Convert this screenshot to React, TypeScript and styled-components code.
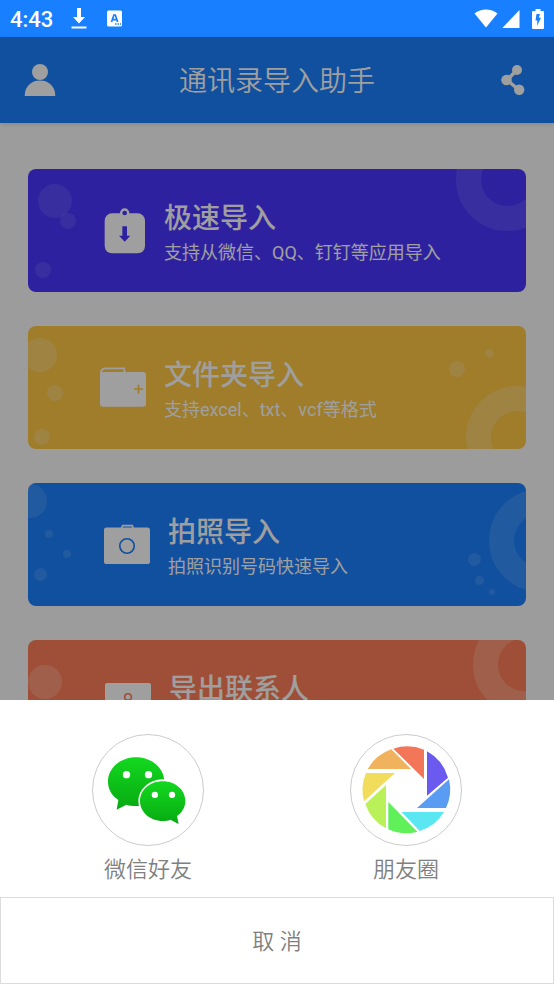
import React from "react";
import styled, { createGlobalStyle } from "styled-components";

const GlobalStyle = createGlobalStyle`
  *, *::before, *::after { box-sizing: border-box; }
  body {
    margin: 0;
    background: #fafafa;
    font-family: Roboto, "Noto Sans CJK SC", sans-serif;
  }
  button {
    margin: 0;
    padding: 0;
    border: 0;
    background: none;
    color: inherit;
    font: inherit;
    cursor: pointer;
  }
  svg { display: block; }
`;

const Screen = styled.div`
  min-height: 100vh;
  display: flex;
  flex-direction: column;
`;

const StatusBar = styled.div`
  height: 37px;
  padding: 0 10px;
  display: flex;
  align-items: center;
  justify-content: space-between;
  background: #1880ff;
  color: #fff;
`;

const StatusGroup = styled.div<{ $gap: number }>`
  display: flex;
  align-items: center;
  gap: ${(p) => p.$gap}px;
`;

const Clock = styled.time`
  padding-top: 2px;
  font-size: 22px;
  line-height: 26px;
  font-weight: 500;
`;

const Stage = styled.div`
  position: relative;
  flex: 1;
  display: flex;
  flex-direction: column;
`;

const Header = styled.header`
  height: 86px;
  padding: 0 22px;
  display: grid;
  grid-template-columns: 36px 1fr 36px;
  align-items: center;
  background: #1a80ff;
  color: #fff;
  box-shadow: 0 1px 4px rgba(0, 0, 0, 0.15);
`;

const HeaderButton = styled.button`
  height: 36px;
  display: grid;
  place-items: center;
`;

const Title = styled.h1`
  margin: 0;
  padding-top: 4px;
  text-align: center;
  font-size: 28px;
  line-height: 40px;
  font-weight: 350;
`;

const CardList = styled.main`
  padding: 46px 28px;
  display: flex;
  flex-direction: column;
  gap: 34px;
`;

const Card = styled.button<{ $color: string; $inset: number }>`
  position: relative;
  overflow: hidden;
  min-height: 123px;
  padding: 0 24px 0 ${(p) => p.$inset}px;
  display: flex;
  align-items: center;
  gap: 18px;
  border-radius: 8px;
  background: ${(p) => p.$color};
  color: #fff;
  text-align: left;
`;

const CardCopy = styled.span`
  min-height: 74px;
  padding-top: 6px;
  display: flex;
  flex-direction: column;
`;

const CardTitle = styled.span`
  font-size: 28px;
  line-height: 38px;
  font-weight: 500;
`;

const CardText = styled.span`
  font-size: 18px;
  line-height: 30px;
  font-weight: 400;
`;

type Spot = { side: "left" | "right"; x: number; y: number; size: number };

const Bubble = styled.span<{ $spot: Spot; $alpha: number }>`
  position: absolute;
  ${(p) => p.$spot.side}: ${(p) => p.$spot.x}px;
  top: ${(p) => p.$spot.y}px;
  width: ${(p) => p.$spot.size}px;
  height: ${(p) => p.$spot.size}px;
  border-radius: 50%;
  background: rgba(255, 255, 255, ${(p) => p.$alpha});
`;

const Ring = styled.span<{ $right: number; $top: number; $alpha: number }>`
  position: absolute;
  right: ${(p) => p.$right}px;
  top: ${(p) => p.$top}px;
  width: 103px;
  height: 103px;
  border: 25px solid rgba(255, 255, 255, ${(p) => p.$alpha});
  border-radius: 50%;
`;

const Scrim = styled.div`
  position: absolute;
  inset: 0;
  background: rgba(0, 0, 0, 0.376);
`;

const Sheet = styled.section`
  position: fixed;
  left: 0;
  right: 0;
  bottom: 0;
  background: #fff;
  color: #808080;
`;

const Options = styled.div`
  padding: 34px 92px 11px;
  display: flex;
  justify-content: space-between;
`;

const Option = styled.button`
  display: flex;
  flex-direction: column;
  align-items: center;
  gap: 8px;
  font-size: 22px;
  line-height: 32px;
  font-weight: 350;
`;

const OptionIcon = styled.span`
  width: 112px;
  height: 112px;
  border: 1px solid #ccc;
  border-radius: 50%;
`;

const Cancel = styled.button`
  width: 100%;
  height: 87px;
  padding-top: 2px;
  border: 1px solid #dcdcdc;
  font-size: 22px;
  line-height: 32px;
  font-weight: 350;
`;

const DownloadIcon = () => (
  <svg width="16" height="22" viewBox="0 0 16 22" fill="currentColor" aria-hidden="true">
    <path d="M6 0h4v9h4l-6 6.500L2 9h4z" />
    <path d="M0.500 18.500h15v2h-15z" />
  </svg>
);

const KeyboardIcon = () => (
  <svg width="15" height="17" viewBox="0 0 15 17" aria-hidden="true">
    <rect y="0.500" width="15" height="16" rx="1.500" fill="#fff" />
    <path d="M4.500 12l2.400-7h1.400l2.400 7M5.500 9.600h4.200" fill="none" stroke="#1880ff" strokeWidth="1.700" />
    <path d="M8 14h1.500M10.500 14H12M13 14h1" stroke="#1880ff" strokeWidth="1.300" />
  </svg>
);

const WifiIcon = () => (
  <svg width="24" height="19" viewBox="0 0 24 19" fill="currentColor" aria-hidden="true">
    <path d="M0.500 4.500C7-0.700 17-0.700 23.500 4.500L12 18.500z" />
  </svg>
);

const SignalIcon = () => (
  <svg width="18" height="18" viewBox="0 0 18 18" fill="currentColor" aria-hidden="true">
    <path d="M17.500 0v18H0.300z" />
  </svg>
);

const BatteryIcon = () => (
  <svg width="12" height="20" viewBox="0 0 12 20" aria-hidden="true">
    <path d="M3.500 0h5v2H11q1 0 1 1v16q0 1-1 1H1q-1 0-1-1V3q0-1 1-1h2.500z" fill="#fff" />
    <path d="M4.500 5H8L6.800 8.800H9L5 17l.4-5.600H3.500z" fill="#1880ff" />
  </svg>
);

const PersonIcon = () => (
  <svg width="32" height="34" viewBox="0 0 32 34" fill="currentColor" aria-hidden="true">
    <circle cx="16" cy="9" r="8" />
    <path d="M0.700 33C0.700 23.500 7 17.500 16 17.500S31.300 23.500 31.300 33z" />
  </svg>
);

const ShareIcon = () => (
  <svg width="26" height="30" viewBox="0 0 26 30" fill="currentColor" aria-hidden="true">
    <path d="M16 5L6 15l12 10" fill="none" stroke="currentColor" strokeWidth="3.500" />
    <circle cx="16" cy="5" r="5" />
    <circle cx="5.500" cy="15" r="5.300" />
    <circle cx="18.200" cy="24.800" r="5.200" />
  </svg>
);

const ClipboardIcon = ({ ink }: { ink: string }) => (
  <svg width="46" height="46" viewBox="240 142 138 138" aria-hidden="true">
    <rect x="254" y="158" width="121" height="120" rx="22" fill="#fff" />
    <circle cx="314" cy="157" r="10.500" fill={ink} stroke="#fff" strokeWidth="7" />
    <path d="M307 197h14v28h10l-17 18-17-18h10z" fill={ink} />
  </svg>
);

const FolderIcon = ({ ink }: { ink: string }) => (
  <svg width="46" height="46" viewBox="240 142 138 138" aria-hidden="true">
    <path d="M242 168q0-16 16-16h55v13" fill="none" stroke="#fff" strokeWidth="5" />
    <rect x="240" y="163" width="138" height="104" rx="9" fill="#fff" />
    <path d="M342 214h27M355.500 201v27" stroke={ink} strokeWidth="5" />
  </svg>
);

const CameraIcon = ({ ink }: { ink: string }) => (
  <svg width="46" height="46" viewBox="250 136 140 140" aria-hidden="true">
    <path d="M303 155l4-8h29l3 8" fill="none" stroke="#fff" strokeWidth="5" />
    <rect x="250" y="153" width="140" height="111" rx="8" fill="#fff" />
    <circle cx="320" cy="209" r="22" fill="none" stroke={ink} strokeWidth="5" />
  </svg>
);

const ContactIcon = ({ ink }: { ink: string }) => (
  <svg width="46" height="46" viewBox="0 0 46 46" aria-hidden="true">
    <rect y="4" width="46" height="38" rx="2" fill="#fff" />
    <circle cx="23" cy="18" r="3.300" fill="none" stroke={ink} strokeWidth="1.600" />
    <path d="M15 34q0-9 8-9t8 9" fill="none" stroke={ink} strokeWidth="1.600" />
  </svg>
);

const WeChatIcon = () => (
  <svg width="110" height="110" viewBox="39 30 330 330" aria-hidden="true">
    <defs>
      <linearGradient id="bubbleGreen" x1="0" y1="0" x2="0" y2="1">
        <stop offset="0" stopColor="#14d820" />
        <stop offset="1" stopColor="#06aa10" />
      </linearGradient>
    </defs>
    <path
      d="M168 97c47 0 85 32 85 73s-38 73-85 73c-10 0-20-1-29-4l-29 15 5-29C96 212 84 193 84 170c0-41 37-73 84-73z"
      fill="url(#bubbleGreen)"
    />
    <ellipse cx="248" cy="228" rx="73" ry="65" fill="#fff" />
    <path
      d="M248 169c38 0 68 26 68 59 0 18-9 34-25 45l5 24-25-13c-7 3-15 4-23 4-38 0-68-27-68-60s30-59 68-59z"
      fill="url(#bubbleGreen)"
    />
    <g fill="#fff">
      <circle cx="139.500" cy="149" r="11" />
      <circle cx="205.500" cy="149" r="11" />
      <circle cx="224.500" cy="209.500" r="9.500" />
      <circle cx="276" cy="209.500" r="9.500" />
    </g>
  </svg>
);

const MomentsIcon = () => (
  <svg width="110" height="110" viewBox="33 30 330 330" aria-hidden="true">
    <path d="M160 71A130 130 0 0 1 252 74V162z" fill="#f37658" />
    <path d="M261 79A130 130 0 0 1 324 158L261 212z" fill="#6b5af0" />
    <path d="M327 163A130 130 0 0 1 318 249H231z" fill="#5b9cf3" />
    <path d="M312 261A130 130 0 0 1 239 318L185 261z" fill="#5ae7f1" />
    <path d="M232 320A130 130 0 0 1 145 313V231z" fill="#60f15a" />
    <path d="M138 310A130 130 0 0 1 76 237L138 180z" fill="#bbf158" />
    <path d="M72 229A130 130 0 0 1 78 144H165z" fill="#f1dc5c" />
    <path d="M83 132A130 130 0 0 1 154 73L213 132z" fill="#f0b25c" />
  </svg>
);

type CardData = {
  title: string;
  text?: string;
  color: string;
  inset: number;
  alpha: number;
  icon: React.ComponentType<{ ink: string }>;
  ring: { right: number; top: number };
  bubbles: Spot[];
};

const cards: CardData[] = [
  {
    title: "极速导入",
    text: "支持从微信、QQ、钉钉等应用导入",
    color: "#4a36ff",
    inset: 72,
    alpha: 0.1,
    icon: ClipboardIcon,
    ring: { right: -33, top: -41 },
    bubbles: [
      { side: "left", x: 10, y: 15, size: 34 },
      { side: "left", x: 32, y: 44, size: 16 },
      { side: "left", x: 7, y: 93, size: 16 },
    ],
  },
  {
    title: "文件夹导入",
    text: "支持excel、txt、vcf等格式",
    color: "#ffc845",
    inset: 72,
    alpha: 0.2,
    icon: FolderIcon,
    ring: { right: -43, top: 60 },
    bubbles: [
      { side: "left", x: -5, y: 12, size: 34 },
      { side: "left", x: 19, y: 59, size: 16 },
      { side: "left", x: 6, y: 103, size: 16 },
      { side: "right", x: 61, y: 35, size: 16 },
      { side: "right", x: 32, y: 23, size: 9 },
    ],
  },
  {
    title: "拍照导入",
    text: "拍照识别号码快速导入",
    color: "#1a80ff",
    inset: 76,
    alpha: 0.13,
    icon: CameraIcon,
    ring: { right: -66, top: 6 },
    bubbles: [
      { side: "left", x: -15, y: 1, size: 34 },
      { side: "left", x: 17, y: 47, size: 8 },
      { side: "left", x: 35, y: 67, size: 8 },
      { side: "left", x: 6, y: 85, size: 13 },
      { side: "right", x: 45, y: 70, size: 13 },
      { side: "right", x: 42, y: 93, size: 9 },
      { side: "right", x: 31, y: 106, size: 6 },
    ],
  },
  {
    title: "导出联系人",
    color: "#ff7f58",
    inset: 77,
    alpha: 0.2,
    icon: ContactIcon,
    ring: { right: -50, top: -27 },
    bubbles: [{ side: "left", x: 0, y: 25, size: 34 }],
  },
];

export default function App() {
  return (
    <Screen>
      <GlobalStyle />
      <StatusBar>
        <StatusGroup $gap={18}>
          <Clock>4:43</Clock>
          <StatusGroup $gap={20}>
            <DownloadIcon />
            <KeyboardIcon />
          </StatusGroup>
        </StatusGroup>
        <StatusGroup $gap={4}>
          <WifiIcon />
          <StatusGroup $gap={12}>
            <SignalIcon />
            <BatteryIcon />
          </StatusGroup>
        </StatusGroup>
      </StatusBar>
      <Stage>
        <Header>
          <HeaderButton aria-label="我的">
            <PersonIcon />
          </HeaderButton>
          <Title>通讯录导入助手</Title>
          <HeaderButton aria-label="分享">
            <ShareIcon />
          </HeaderButton>
        </Header>
        <CardList>
          {cards.map(({ icon: Icon, ...card }) => (
            <Card key={card.title} $color={card.color} $inset={card.inset}>
              <Ring $right={card.ring.right} $top={card.ring.top} $alpha={card.alpha} />
              {card.bubbles.map((spot, i) => (
                <Bubble key={i} $spot={spot} $alpha={card.alpha} />
              ))}
              <Icon ink={card.color} />
              <CardCopy>
                <CardTitle>{card.title}</CardTitle>
                {card.text && <CardText>{card.text}</CardText>}
              </CardCopy>
            </Card>
          ))}
        </CardList>
        <Scrim />
      </Stage>
      <Sheet role="dialog" aria-modal="true" aria-label="分享">
        <Options>
          <Option>
            <OptionIcon>
              <WeChatIcon />
            </OptionIcon>
            微信好友
          </Option>
          <Option>
            <OptionIcon>
              <MomentsIcon />
            </OptionIcon>
            朋友圈
          </Option>
        </Options>
        <Cancel>取 消</Cancel>
      </Sheet>
    </Screen>
  );
}
